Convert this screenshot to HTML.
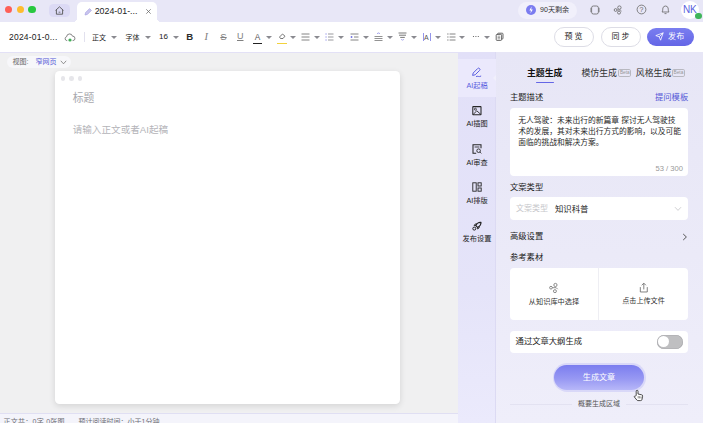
<!DOCTYPE html>
<html lang="zh-CN">
<head>
<meta charset="utf-8">
<title>AI起稿</title>
<style>
*{box-sizing:border-box;margin:0;padding:0}
html,body{width:703px;height:423px;overflow:hidden}
body{position:relative;background:#f0f0f1;font-family:"Liberation Sans","Noto Sans CJK SC",sans-serif;color:#222;font-size:8px;line-height:1}
.abs{position:absolute}
#titlebar{left:0;top:0;width:703px;height:22px;background:#e8e7f7}
.tl{width:7.2px;height:7.2px;border-radius:50%;top:5.6px}
#home{left:48.5px;top:4.2px;width:21.2px;height:13px;border-radius:4.5px;background:#dcdaf5}
#tab{left:77px;top:1.8px;width:79.5px;height:21.2px;background:#fff;border-radius:5px 5px 0 0}
#tab span{position:absolute;left:17.7px;top:5.3px;font-size:8.85px;color:#222;letter-spacing:0}
#toolbar{left:0;top:22px;width:703px;height:30px;background:#fff}
#tbline{left:0;top:52px;width:703px;height:1px;background:#e3e1f6}
.tbt{position:absolute;top:10.5px;font-size:7px;color:#222;white-space:nowrap}
.car{position:absolute;top:12.4px;width:0;height:0;margin-left:0.2px;border-left:3px solid transparent;border-right:3px solid transparent;border-top:3.4px solid #8a8a90}
#workspace{left:0;top:53px;width:458px;height:360px;background:#f0f0f1}
#viewpill{left:6.5px;top:56.2px;width:64px;height:11.4px;border-radius:6px;background:#f7f7fa;font-size:7px;color:#666;white-space:nowrap}
#doc{left:55.4px;top:71px;width:344.6px;height:333px;background:#fff;border-radius:4.5px;box-shadow:0 2px 6px rgba(0,0,0,.12)}
#status{left:0;top:413px;width:458px;height:10px;background:#f4f4fb;border-top:1px solid #e0dff3;font-size:7px;color:#6e6e74;white-space:nowrap}
#sidebar{left:457.5px;top:52px;width:38.5px;height:371px;background:linear-gradient(180deg,#e2e0f8 0%,#e5e4f9 65%,#ebeafc 100%);border-right:0.5px solid #dcdaf3}
#sideactive{left:457.5px;top:58.8px;width:38px;height:38px;background:#ebe9fc}
.sl{position:absolute;left:458px;width:38px;text-align:center;font-size:7.2px;color:#222;white-space:nowrap}
#panel{left:496px;top:52px;width:207px;height:371px;background:linear-gradient(180deg,#e7e6f6 0%,#ebeaf8 55%,#efeefa 100%)}
.h{position:absolute;font-size:8.3px;color:#222;white-space:nowrap}
.card{position:absolute;background:#fff;border-radius:4px}
#tab:before,#tab:after{content:"";position:absolute;bottom:1px;width:4px;height:4px}
#tab:before{left:-4px;background:radial-gradient(circle at 0 0,transparent 3.8px,#fff 4.2px)}
#tab:after{right:-4px;background:radial-gradient(circle at 100% 0,transparent 3.8px,#fff 4.2px)}
</style>
</head>
<body>
<div id="titlebar" class="abs"></div>
<div class="abs tl" style="left:4.9px;background:#fe5f57"></div>
<div class="abs tl" style="left:16.7px;background:#febc2e"></div>
<div class="abs tl" style="left:28.4px;background:#28c840"></div>
<div id="home" class="abs">
<svg width="21" height="15" viewBox="0 0 21 15" style="position:absolute;left:0.2px;top:-0.9px"><path d="M6.6 7.4 L10.5 3.8 L14.4 7.4 M7.4 6.8 V11.2 H13.6 V6.8" fill="none" stroke="#555" stroke-width="0.9" stroke-linejoin="round"/><path d="M9.6 9.2 H11.4" stroke="#555" stroke-width="0.8"/></svg>
</div>
<div id="tab" class="abs">
<svg width="10" height="10" viewBox="0 0 10 10" style="position:absolute;left:6.4px;top:5.2px"><path d="M2 8 L2.6 5.6 L6.6 1.6 L8.4 3.4 L4.4 7.4 Z" fill="#c9c5ee" stroke="#a9a4e2" stroke-width="0.7" stroke-linejoin="round"/></svg>
<span>2024-01-...</span>
<svg width="7" height="7" viewBox="0 0 7 7" style="position:absolute;left:68.2px;top:6.1px"><path d="M1.3 1.3 L5.7 5.7 M5.7 1.3 L1.3 5.7" stroke="#666" stroke-width="0.75"/></svg>
</div>

<div id="toolbar" class="abs"><div id="tbin" style="position:absolute;left:0;top:1.3px;width:703px;height:29px">
<div class="tbt" style="left:9px;top:9.6px;font-size:8.5px;letter-spacing:0.22px">2024-01-0...</div>
<svg width="12" height="10" viewBox="0 0 12 10" style="position:absolute;left:64px;top:9.3px"><path d="M3.2 7.6 H2.8 A2 2 0 0 1 2.6 3.7 A3 3 0 0 1 8.5 3.2 A2.2 2.2 0 0 1 9 7.6 H8.6" fill="none" stroke="#666" stroke-width="0.8"/><circle cx="6" cy="7" r="1.6" fill="#3fae55"/></svg>
<div class="abs" style="left:84.4px;top:9px;width:1px;height:9.5px;background:#e2e1ee"></div>
<div class="tbt" style="left:92px">正文</div><div class="car" style="left:111px"></div>
<div class="tbt" style="left:125.6px">字体</div><div class="car" style="left:145px"></div>
<div class="tbt" style="left:159px;top:10px;font-size:8px">16</div><div class="car" style="left:173px"></div>
<div class="tbt" style="left:186.3px;top:9px;font-size:9.6px;font-weight:bold;color:#2c2c2c">B</div>
<div class="tbt" style="left:204.6px;top:8.6px;font-size:10.4px;font-style:italic;color:#808080;font-family:'Liberation Serif',serif">I</div>
<div class="tbt" style="left:220.3px;top:9.2px;font-size:9.5px;color:#808080;text-decoration:line-through">S</div>
<div class="tbt" style="left:237px;top:9.2px;font-size:9px;color:#808080;text-decoration:underline;text-underline-offset:1px">U</div>
<div class="tbt" style="left:254.7px;top:10.2px;font-size:8.3px;color:#555">A</div>
<div class="abs" style="left:252.7px;top:19.7px;width:9.8px;height:1px;background:#222"></div>
<div class="car" style="left:266px"></div>
<svg width="10" height="9" viewBox="0 0 10 9" style="position:absolute;left:277px;top:9.2px"><path d="M2.5 5 L5.5 2 L8 4.2 L6 6.5 H3.5 Z" fill="none" stroke="#555" stroke-width="0.8" stroke-linejoin="round"/></svg>
<div class="abs" style="left:277px;top:20px;width:10px;height:1px;background:#f2d23c"></div>
<div class="car" style="left:290px"></div>
<svg width="9" height="8" viewBox="0 0 9 8" style="position:absolute;left:301px;top:9.9px"><path d="M0.5 1 H8.5 M0.5 4 H8.5 M0.5 7 H8.5" stroke="#666" stroke-width="0.8"/></svg>
<div class="car" style="left:314px"></div>
<svg width="9" height="8" viewBox="0 0 9 8" style="position:absolute;left:325px;top:9.9px"><path d="M3 1 H8.5 M3 4 H8.5 M3 7 H8.5" stroke="#6e6e74" stroke-width="0.7"/><path d="M0.5 1 H1.6 M0.5 4 H1.6 M0.5 7 H1.6" stroke="#6a6be0" stroke-width="0.9"/></svg>
<div class="car" style="left:338px"></div>
<svg width="9" height="8" viewBox="0 0 9 8" style="position:absolute;left:350px;top:9.9px"><path d="M0.5 1 H8.5 M4 4 H8.5 M0.5 7 H8.5" stroke="#666" stroke-width="0.8"/><path d="M0.5 4 H2.6 M1.5 3 V5" stroke="#6a6be0" stroke-width="0.8"/></svg>
<div class="car" style="left:363px"></div>
<svg width="9" height="9" viewBox="0 0 9 9" style="position:absolute;left:374px;top:9.2px"><path d="M0.5 4.5 H8.5 M0.5 6.5 H8.5 M0.5 8.5 H8.5" stroke="#777" stroke-width="0.8"/><path d="M3.2 2 L4.5 0.7 L5.8 2" stroke="#6a6be0" stroke-width="0.7" fill="none"/></svg>
<div class="car" style="left:387px"></div>
<svg width="9" height="9" viewBox="0 0 9 9" style="position:absolute;left:398px;top:9.2px"><path d="M0.5 1 H8.5 M1 3.2 H8 M2.2 5.4 H6.8" stroke="#555" stroke-width="0.8"/><path d="M3.4 7.2 L4.5 8.3 L5.6 7.2" stroke="#6a6be0" stroke-width="0.7" fill="none"/></svg>
<div class="car" style="left:411px"></div>
<div class="tbt" style="left:424px;top:10.5px;font-size:7px;color:#555">A</div>
<div class="abs" style="left:422.5px;top:10px;width:0.8px;height:8px;background:#9495ea"></div>
<div class="abs" style="left:429.5px;top:10px;width:0.8px;height:8px;background:#9495ea"></div>
<div class="car" style="left:435px"></div>
<svg width="9" height="8" viewBox="0 0 9 8" style="position:absolute;left:447px;top:9.9px"><path d="M2.6 1 H8.5 M2.6 4 H8.5 M2.6 7 H8.5" stroke="#666" stroke-width="0.8"/><path d="M0.4 1 H1.4 M0.4 4 H1.4 M0.4 7 H1.4" stroke="#444" stroke-width="0.9"/></svg>
<div class="car" style="left:459px"></div>
<svg width="8" height="3" viewBox="0 0 8 3" style="position:absolute;left:471.7px;top:11.7px"><circle cx="1.5" cy="1.5" r="0.6" fill="#555"/><circle cx="3.9" cy="1.5" r="0.6" fill="#555"/><circle cx="6.3" cy="1.5" r="0.6" fill="#555"/></svg>
<div class="car" style="left:484px"></div>
<svg width="9" height="9" viewBox="0 0 9 9" style="position:absolute;left:495px;top:9.2px"><rect x="2.6" y="1.2" width="5.4" height="5.8" rx="0.8" fill="#fff" stroke="#444" stroke-width="0.8"/><rect x="1.2" y="2.4" width="5.4" height="6" rx="0.8" fill="#fff" stroke="#444" stroke-width="0.8"/><path d="M2.6 4.2 H5.2 M2.6 5.5 H5.2 M2.6 6.8 H5.2" stroke="#444" stroke-width="0.5"/></svg>

<div class="abs" style="left:554px;top:3.7px;width:39.5px;height:20px;border:1px solid #dddde6;border-radius:10px;background:#fff"></div>
<div class="tbt" style="left:564.6px;top:9.8px;font-size:8px;letter-spacing:2px;color:#222">预览</div>
<div class="abs" style="left:601px;top:3.7px;width:40px;height:20px;border:1px solid #dddde6;border-radius:10px;background:#fff"></div>
<div class="tbt" style="left:611.6px;top:9.8px;font-size:8px;letter-spacing:2px;color:#222">同步</div>
<div class="abs" style="left:647px;top:4.3px;width:47px;height:18.8px;border-radius:10px;background:linear-gradient(180deg,#7a7ef0,#6466e6)"></div>
<svg width="9" height="9" viewBox="0 0 9 9" style="position:absolute;left:655px;top:9.2px"><path d="M0.8 3.6 L8.2 0.8 L5.6 8.2 L4.2 4.8 Z M4.2 4.8 L8.2 0.8" fill="none" stroke="#fff" stroke-width="0.8" stroke-linejoin="round"/></svg>
<div class="tbt" style="left:668px;top:9.8px;font-size:8px;color:#fff;letter-spacing:0.3px">发布</div>
</div></div>

<!-- title bar right -->
<div class="abs" style="left:518.3px;top:1.7px;width:58.8px;height:17px;border-radius:8.5px;background:#f1f0fb"></div>
<div class="abs" style="left:525.5px;top:4.8px;width:10.4px;height:10.4px;border-radius:50%;background:#7b7cf0"></div>
<svg width="10" height="10" viewBox="0 0 10 10" style="position:absolute;left:525.7px;top:5px"><path d="M5.6 1.6 L3.4 5.4 H5 L4.4 8.4 L6.8 4.4 H5.2 Z" fill="#fff"/></svg>
<div class="abs" style="left:540px;top:6.5px;font-size:7.1px;color:#333;white-space:nowrap">90天剩余</div>
<svg width="10" height="10" viewBox="0 0 10 10" style="position:absolute;left:590px;top:5px"><rect x="1.6" y="1" width="6.8" height="8" rx="1.8" fill="none" stroke="#666" stroke-width="0.8"/><path d="M0.8 2.8 V7.2 M9.2 2.8 V7.2" stroke="#666" stroke-width="0.6"/></svg>
<svg width="11" height="10" viewBox="0 0 11 10" style="position:absolute;left:613px;top:4.5px"><circle cx="6.4" cy="2.6" r="1.7" fill="none" stroke="#666" stroke-width="0.8"/><circle cx="2.6" cy="5" r="1.4" fill="none" stroke="#666" stroke-width="0.8"/><circle cx="6" cy="7.6" r="1.5" fill="none" stroke="#666" stroke-width="0.8"/><path d="M4 5 H7.2 L8.6 6.2" fill="none" stroke="#666" stroke-width="0.7"/></svg>
<svg width="11" height="11" viewBox="0 0 11 11" style="position:absolute;left:635.8px;top:4px"><circle cx="5.5" cy="5.5" r="4.4" fill="none" stroke="#666" stroke-width="0.8"/></svg>
<div class="abs" style="left:639.4px;top:6px;font-size:7px;color:#666">?</div>
<svg width="11" height="11" viewBox="0 0 11 11" style="position:absolute;left:659.7px;top:4px"><path d="M2 8 C3 7 2.6 5.4 2.9 4 A2.7 2.7 0 0 1 8.1 4 C8.4 5.4 8 7 9 8 Z" fill="none" stroke="#666" stroke-width="0.8" stroke-linejoin="round"/><path d="M4.5 9.6 H6.5" stroke="#666" stroke-width="0.8"/></svg>
<div class="abs" style="left:681px;top:1px;width:18px;height:18px;border-radius:50%;background:#fff"></div>
<div class="abs" style="left:683px;top:5px;font-size:10px;color:#5b5fe0;letter-spacing:-0.3px">NK</div>
<div class="abs" style="left:695.4px;top:12.6px;width:6.2px;height:6.2px;border-radius:50%;background:#3fb55a"></div>

<div id="tbline" class="abs"></div>
<div id="workspace" class="abs"></div>
<div id="viewpill" class="abs"><span style="position:absolute;left:6px;top:2px">视图:</span><span style="position:absolute;left:29px;top:2px;color:#5457d6">窄网页</span>
<svg width="7" height="5" viewBox="0 0 7 5" style="position:absolute;left:53px;top:3.5px"><path d="M0.8 0.8 L3.5 3.8 L6.2 0.8" fill="none" stroke="#666" stroke-width="0.7"/></svg></div>

<div id="doc" class="abs">
<div class="abs" style="left:5.2px;top:5.1px;width:4.6px;height:4.6px;border-radius:50%;background:#e6e6ea"></div>
<div class="abs" style="left:13.7px;top:5.1px;width:4.6px;height:4.6px;border-radius:50%;background:#e6e6ea"></div>
<div class="abs" style="left:22.2px;top:5.1px;width:4.6px;height:4.6px;border-radius:50%;background:#e6e6ea"></div>
<div class="abs" style="left:17.3px;top:22.2px;font-size:10.8px;color:#a8a8ad;white-space:nowrap">标题</div>
<div class="abs" style="left:17.3px;top:53.8px;font-size:9.6px;color:#b4b4b9;white-space:nowrap">请输入正文或者AI起稿</div>
</div>

<div id="status" class="abs"><span style="position:absolute;left:3.6px;top:3.6px;letter-spacing:0.25px">正文共：0字 0张图</span><span style="position:absolute;left:78.6px;top:3.6px">预计阅读时间：小于1分钟</span></div>

<div id="sidebar" class="abs"></div>
<div id="sideactive" class="abs"></div>
<div class="abs" style="left:492.5px;top:74.5px;width:0;height:0;border-top:3.5px solid transparent;border-bottom:3.5px solid transparent;border-right:3.5px solid #f1f0fb"></div>
<!-- side icons -->
<svg width="12" height="12" viewBox="0 0 12 12" style="position:absolute;left:471px;top:66.6px"><path d="M1.6 8.4 L2.2 6 L6.6 1.6 A1.3 1.3 0 0 1 8.6 3.4 L4.2 7.8 Z" fill="none" stroke="#5b5fe0" stroke-width="1" stroke-linejoin="round"/><path d="M5.4 9.4 C6.8 8.6 7.6 10.4 9.8 9.2" fill="none" stroke="#5b5fe0" stroke-width="1" stroke-linecap="round"/></svg>
<div class="sl" style="top:82px;color:#5b5fe0">AI起稿</div>
<svg width="12" height="12" viewBox="0 0 12 12" style="position:absolute;left:471px;top:104.6px"><rect x="1.8" y="1.6" width="8.2" height="8.2" rx="0.3" fill="none" stroke="#262626" stroke-width="1.05"/><circle cx="4.4" cy="4.2" r="1" fill="none" stroke="#262626" stroke-width="0.8"/><path d="M2.2 9.4 L5.8 5.8 L9.8 9.4" fill="none" stroke="#262626" stroke-width="0.9"/></svg>
<div class="sl" style="top:119.8px">AI插图</div>
<svg width="12" height="12" viewBox="0 0 12 12" style="position:absolute;left:471px;top:142.8px"><path d="M5.2 10.2 H2 V1.8 H10 V5.2" fill="none" stroke="#262626" stroke-width="1.05"/><path d="M3.6 4 H8.4" stroke="#262626" stroke-width="0.85"/><circle cx="7.6" cy="7.7" r="1.8" fill="none" stroke="#262626" stroke-width="0.9"/><path d="M9 9.1 L10.3 10.4" stroke="#262626" stroke-width="0.9"/></svg>
<div class="sl" style="top:159px">AI审查</div>
<svg width="12" height="12" viewBox="0 0 12 12" style="position:absolute;left:471px;top:180.9px"><rect x="1.8" y="1.8" width="3.4" height="8.4" fill="none" stroke="#262626" stroke-width="0.9"/><rect x="7" y="1.8" width="3.2" height="3.2" fill="none" stroke="#262626" stroke-width="0.9"/><rect x="7" y="7" width="3.2" height="3.2" fill="none" stroke="#262626" stroke-width="0.9"/></svg>
<div class="sl" style="top:197px">AI排版</div>
<svg width="12" height="12" viewBox="0 0 12 12" style="position:absolute;left:471px;top:219.8px"><path d="M10 2.3 C7.8 2.1 5.8 3.3 4.7 5.5 L6.6 7.4 C8.8 6.3 10.1 4.4 10 2.3 Z" fill="none" stroke="#222" stroke-width="1.1" stroke-linejoin="round"/><path d="M8.9 2.6 L9.7 3.4" stroke="#222" stroke-width="1.3"/><path d="M4.9 5.3 L3.1 5.5 L4.4 3.9 L5.8 3.9 M6.8 7.2 L6.6 9 L8.2 7.8 L8.2 6.3" fill="none" stroke="#222" stroke-width="0.9" stroke-linejoin="round"/><circle cx="3.3" cy="8.6" r="1.5" fill="none" stroke="#222" stroke-width="1"/></svg>
<div class="sl" style="top:235px">发布设置</div>

<div id="panel" class="abs"></div>
<!-- tabs -->
<div class="h" style="left:527px;top:68.8px;font-size:8.9px;font-weight:bold;color:#111">主题生成</div>
<div class="abs" style="left:536px;top:82px;width:18px;height:1.4px;background:#6466e6;border-radius:1px"></div>
<div class="h" style="left:581.5px;top:68.8px;font-size:8.9px;color:#333">模仿生成</div>
<div class="abs" style="left:618.2px;top:69.4px;width:13.3px;height:7.8px;border:0.6px solid #b8b8c0;border-radius:1.8px;font-size:4.8px;color:#999;text-align:center;line-height:6.6px">Beta</div>
<div class="h" style="left:635.8px;top:68.8px;font-size:8.9px;color:#333">风格生成</div>
<div class="abs" style="left:671.8px;top:69.4px;width:13.3px;height:7.8px;border:0.6px solid #b8b8c0;border-radius:1.8px;font-size:4.8px;color:#999;text-align:center;line-height:6.6px">Beta</div>

<div class="h" style="left:510px;top:93px">主题描述</div>
<div class="h" style="left:655px;top:93px;color:#5457d6">提问模板</div>
<div class="card" style="left:510px;top:108px;width:178px;height:68px"></div>
<div class="abs" style="left:518.3px;top:114.5px;width:170px;white-space:nowrap;font-size:7.75px;line-height:11px;color:#2a2a2a">无人驾驶：未来出行的新篇章 探讨无人驾驶技<br>术的发展，其对未来出行方式的影响，以及可能<br>面临的挑战和解决方案。</div>
<div class="abs" style="left:640px;width:43px;text-align:right;top:164.8px;font-size:7.6px;color:#999;white-space:nowrap">53 / 300</div>

<div class="h" style="left:510px;top:182.8px">文案类型</div>
<div class="card" style="left:510px;top:197px;width:178px;height:23px"></div>
<div class="abs" style="left:516px;top:205px;font-size:8px;color:#c6c6ca;white-space:nowrap">文案类型</div>
<div class="abs" style="left:555px;top:204.8px;font-size:8.4px;color:#222;white-space:nowrap">知识科普</div>
<svg width="8" height="6" viewBox="0 0 8 6" style="position:absolute;left:674px;top:206px"><path d="M1 1.2 L4 4.4 L7 1.2" fill="none" stroke="#c4c4c8" stroke-width="0.8"/></svg>

<div class="h" style="left:510px;top:232.2px">高级设置</div>
<svg width="6" height="8" viewBox="0 0 6 8" style="position:absolute;left:682px;top:233px"><path d="M1.2 1 L4.4 4 L1.2 7" fill="none" stroke="#444" stroke-width="0.9"/></svg>
<div class="h" style="left:510px;top:253.2px">参考素材</div>
<div class="card" style="left:510px;top:268px;width:178px;height:52px"></div>
<div class="abs" style="left:598px;top:268px;width:1px;height:52px;background:#eeeef3"></div>
<svg width="12.4" height="12.4" viewBox="0 0 10 10" style="position:absolute;left:548.2px;top:281.8px"><circle cx="6" cy="2.4" r="1.3" fill="none" stroke="#666" stroke-width="0.6"/><circle cx="2.4" cy="4.6" r="1.1" fill="none" stroke="#666" stroke-width="0.6"/><circle cx="5.6" cy="7.4" r="1.2" fill="none" stroke="#666" stroke-width="0.6"/><path d="M3.5 4.6 H6.6 L7.8 5.8" fill="none" stroke="#666" stroke-width="0.6"/></svg>
<div class="abs" style="left:510px;top:297.5px;width:88px;text-align:center;font-size:7.2px;color:#333;white-space:nowrap">从知识库中选择</div>
<svg width="11.6" height="11.6" viewBox="0 0 10 10" style="position:absolute;left:638.4px;top:282.3px"><path d="M2 4.4 V8.6 H8 V4.4" fill="none" stroke="#666" stroke-width="0.7"/><path d="M5 6.4 V1.2 M3.2 2.8 L5 1 L6.8 2.8" fill="none" stroke="#666" stroke-width="0.7"/></svg>
<div class="abs" style="left:599px;top:297.5px;width:89px;text-align:center;font-size:7.1px;color:#333;white-space:nowrap">点击上传文件</div>

<div class="card" style="left:510px;top:330.5px;width:178px;height:22.3px"></div>
<div class="h" style="left:515.6px;top:337.2px">通过文章大纲生成</div>
<div class="abs" style="left:656.5px;top:335px;width:26.5px;height:13.5px;border-radius:7px;background:#bfbfc1;box-shadow:inset 0 0 0 0.6px #a9a9ad"></div>
<div class="abs" style="left:657.8px;top:336.2px;width:11px;height:11px;border-radius:50%;background:#fff"></div>

<div class="abs" style="left:552.6px;top:363.2px;width:93px;height:28.4px;border-radius:14.2px;background:#d9d8f8"></div>
<div class="abs" style="left:554px;top:364.6px;width:90.2px;height:25.6px;border-radius:12.8px;background:linear-gradient(180deg,#7b7def 0%,#9798f3 55%,#b7b7f8 100%)"></div>
<div class="abs" style="left:555px;top:373.6px;width:88px;text-align:center;font-size:8.1px;color:#fff;white-space:nowrap">生成文章</div>
<div class="abs" style="left:510px;top:403.5px;width:62px;height:1px;background:#e3e2f1"></div>
<div class="abs" style="left:626px;top:403.5px;width:62px;height:1px;background:#e3e2f1"></div>
<div class="abs" style="left:510px;top:400px;width:178px;text-align:center;font-size:7px;color:#555;white-space:nowrap">概要生成区域</div>
<!-- cursor -->
<svg width="11" height="13" viewBox="0 0 11 13" style="position:absolute;left:632.6px;top:389.3px"><path d="M3.2 6.6 V2.2 A0.9 0.9 0 0 1 5 2.2 V5 L8.6 5.8 A1.2 1.2 0 0 1 9.6 7.2 L9 10.4 A1.4 1.4 0 0 1 7.6 11.6 H5 A1.6 1.6 0 0 1 3.8 11 L1.4 8 A0.8 0.8 0 0 1 2.6 7 Z" fill="#fff" stroke="#222" stroke-width="0.8" stroke-linejoin="round"/><path d="M5.2 7 V9.4 M6.6 7.2 V9.4 M8 7.4 V9.4" stroke="#222" stroke-width="0.5"/></svg>
</body>
</html>
